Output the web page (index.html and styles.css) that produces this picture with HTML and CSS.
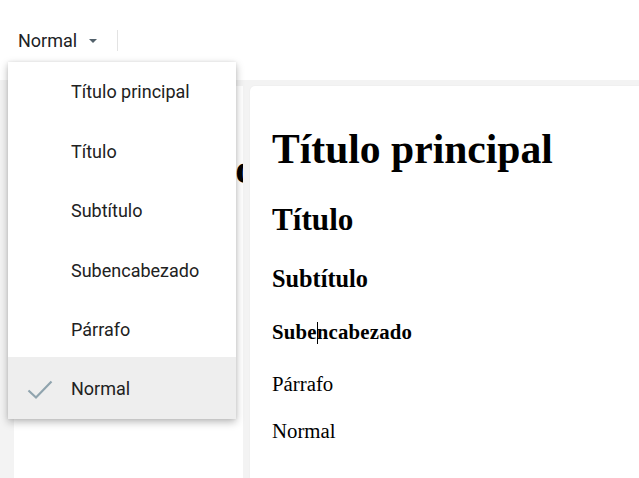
FILE: index.html
```html
<!DOCTYPE html>
<html lang="es">
<head>
<meta charset="utf-8">
<link rel="stylesheet" href="styles.css">
</head>
<body>
<div class="toolbar">
  <div class="style-btn">
    <span class="style-label">Normal</span>
    <svg class="caret" width="8" height="4" viewBox="0 0 8 4"><path d="M0 0 L8 0 L4 4 Z" fill="#52616b"/></svg>
  </div>
  <div class="divider"></div>
</div>
<div class="workspace">
  <div class="side-page">
    <div class="side-heading"><span class="side-glyph">o</span></div>
  </div>
  <div class="doc-page">
    <h1 class="d-h1">Título principal</h1>
    <h2 class="d-h2">Título</h2>
    <h3 class="d-h3">Subtítulo</h3>
    <h4 class="d-h4">Sube<span class="cursor"></span>ncabezado</h4>
    <p class="d-p">Párrafo</p>
    <div class="d-normal">Normal</div>
  </div>
</div>
<ul class="menu">
  <li class="menu-item"><span class="check"></span><span class="menu-text">Título principal</span></li>
  <li class="menu-item"><span class="check"></span><span class="menu-text">Título</span></li>
  <li class="menu-item"><span class="check"></span><span class="menu-text">Subtítulo</span></li>
  <li class="menu-item"><span class="check"></span><span class="menu-text">Subencabezado</span></li>
  <li class="menu-item"><span class="check"></span><span class="menu-text">Párrafo</span></li>
  <li class="menu-item selected"><span class="check"><svg width="26" height="20" viewBox="0 0 26 20"><path d="M1.5 10.5 L9 17.5 L24.5 1.5" fill="none" stroke="#90a4ae" stroke-width="2.2"/></svg></span><span class="menu-text">Normal</span></li>
</ul>
</body>
</html>
```
FILE: styles.css
```css
html, body {
  margin: 0;
  padding: 0;
  height: 100%;
  overflow: hidden;
  background: #ffffff;
  font-family: Roboto, "Noto Sans", sans-serif;
}

.toolbar {
  height: 80px;
  display: flex;
  align-items: center;
  padding-left: 18px;
  box-sizing: border-box;
  background: #ffffff;
}

.style-btn {
  display: flex;
  align-items: center;
  height: 24px;
}

.style-label {
  font-size: 18px;
  color: #202124;
}

.caret {
  margin-left: 12px;
  margin-top: 1px;
}

.divider {
  width: 1px;
  height: 21px;
  background: #e3e3e3;
  margin-left: 20px;
}

.workspace {
  display: flex;
  gap: 7px;
  padding: 6px 0 0 14px;
  height: 398px;
  box-sizing: border-box;
  background: #f3f3f3;
}

.side-page {
  width: 229px;
  flex: none;
  background: #ffffff;
  overflow: hidden;
  padding-top: 58px;
  box-sizing: border-box;
}

.side-heading {
  font-family: "Liberation Serif", "Times New Roman", serif;
  font-weight: bold;
  font-size: 41.6px;
  line-height: 50px;
  text-align: right;
  white-space: nowrap;
  color: #000;
}

.side-glyph {
  display: inline-block;
  margin-right: -13px;
}

.doc-page {
  flex: 1;
  background: #ffffff;
  border-top-left-radius: 5px;
  box-shadow: 0 0 2px rgba(0, 0, 0, 0.06);
  padding: 38px 0 0 22px;
  font-family: "Liberation Serif", "Times New Roman", serif;
  color: #000;
  display: flex;
  flex-direction: column;
  align-items: flex-start;
}

.doc-page h1, .doc-page h2, .doc-page h3, .doc-page h4, .doc-page p {
  margin: 0;
}

.d-h1 {
  font-size: 41.6px;
  line-height: 50px;
  font-weight: bold;
}

.d-h2 {
  font-size: 31.2px;
  line-height: 40px;
  font-weight: bold;
  margin-top: 25.5px !important;
}

.d-h3 {
  font-size: 24.3px;
  line-height: 30px;
  font-weight: bold;
  margin-top: 24.3px !important;
}

.d-h4 {
  font-size: 20.8px;
  line-height: 26px;
  font-weight: bold;
  letter-spacing: 0.2px;
  margin-top: 25.2px !important;
}

.cursor {
  display: inline-block;
  width: 1px;
  height: 22px;
  background: #000;
  vertical-align: -5px;
  margin-right: -1px;
}

.d-p {
  font-size: 20.8px;
  line-height: 26px;
  margin-top: 26px !important;
}

.d-normal {
  font-size: 20.8px;
  line-height: 26px;
  margin-top: 21px;
}

.menu {
  position: absolute;
  left: 8px;
  top: 62px;
  width: 228px;
  margin: 0;
  padding: 0;
  list-style: none;
  background: #ffffff;
  box-shadow: 0 3px 8px rgba(0, 0, 0, 0.28), 0 0 3px rgba(0, 0, 0, 0.08);
}

.menu-item {
  height: 59.5px;
  display: flex;
  align-items: center;
  font-size: 18px;
  color: #212121;
}

.menu-item.selected {
  background: #eeeeee;
  height: 62px;
  margin-top: -2.5px;
}

.check {
  width: 63px;
  flex: none;
  display: flex;
  justify-content: flex-start;
  padding-left: 19px;
  box-sizing: border-box;
}

.check svg {
  display: block;
  margin-top: 4px;
}
```
